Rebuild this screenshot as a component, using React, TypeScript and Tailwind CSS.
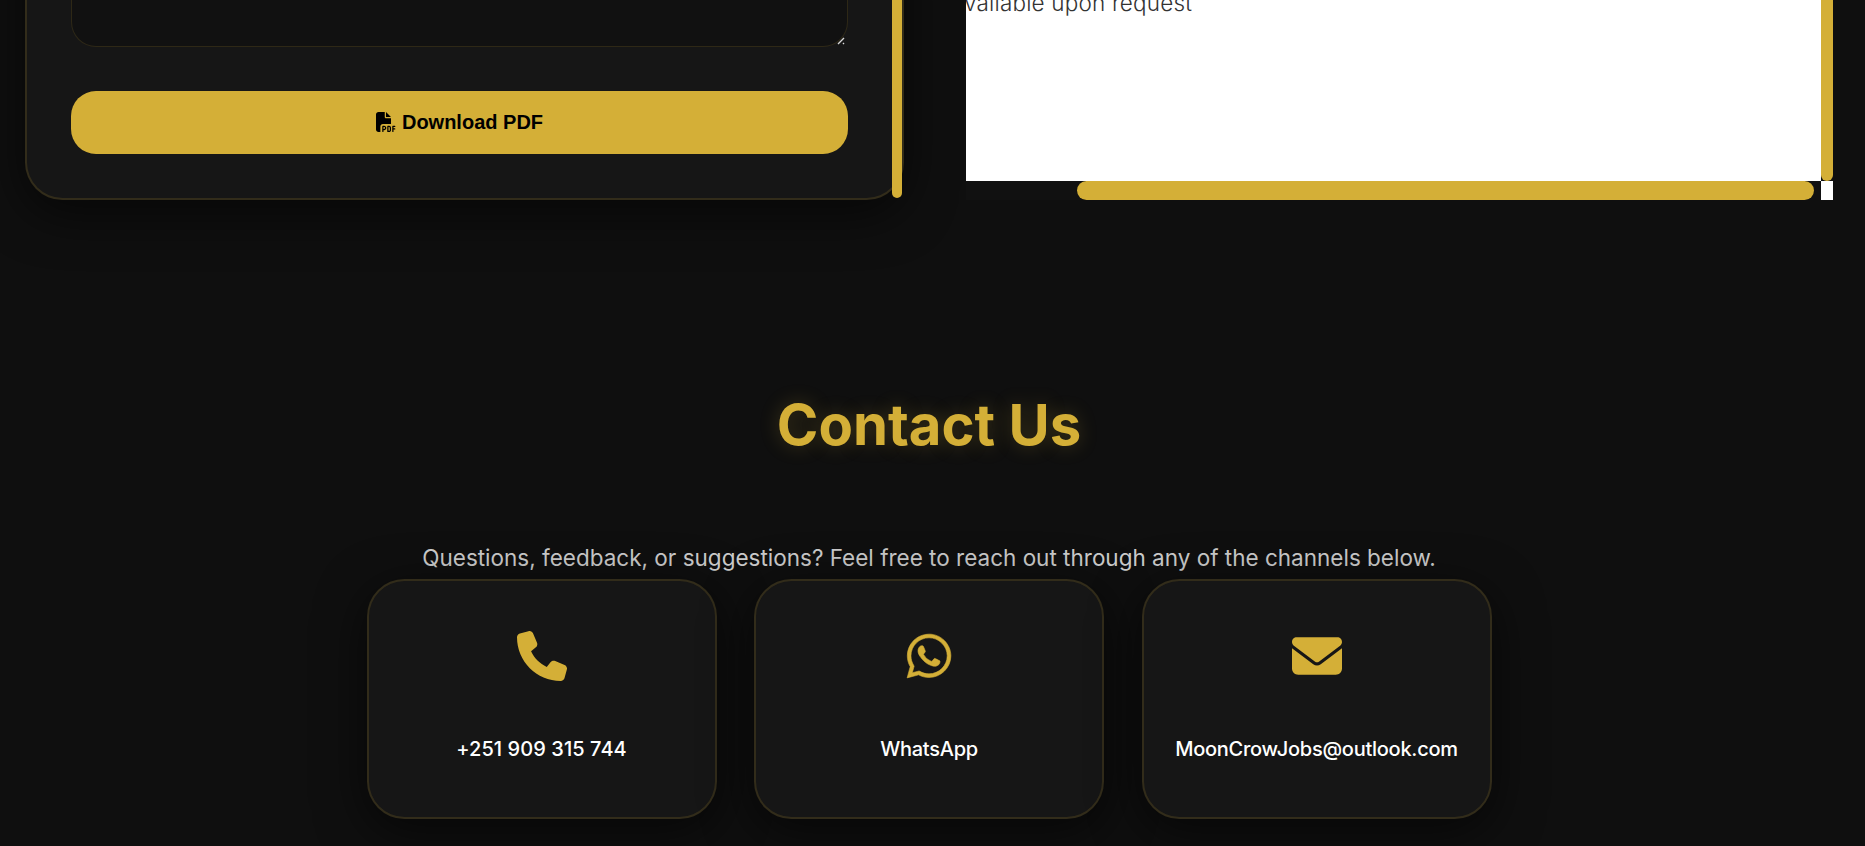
import { FaEnvelope, FaFilePdf, FaPhone, FaWhatsapp } from "react-icons/fa6";

const CHANNELS = [
  { label: "+251 909 315 744", icon: FaPhone, iconClass: "", labelClass: "tracking-[0.003em]" },
  { label: "WhatsApp", icon: FaWhatsapp, iconClass: "stroke-current stroke-[6px]", labelClass: "tracking-[-0.013em]" },
  { label: "MoonCrowJobs@outlook.com", icon: FaEnvelope, iconClass: "", labelClass: "tracking-[-0.013em]" },
];

function ResumeForm() {
  return (
    <div className="relative w-[879px] h-[260px] -mt-[60px] rounded-b-[37.5px] border-2 border-t-0 border-[#d4af37]/15 bg-[#161616] pr-[54px] pl-[44px] shadow-[0_12px_50px_rgba(0,0,0,0.6)]">
      <div className="relative h-[107px] rounded-b-[25px] border border-t-0 border-[#d4af37]/15 bg-[#111111]">
        <svg className="absolute right-[2px] bottom-[1px] h-2 w-2" viewBox="0 0 8 8" stroke="#d8d8d8" strokeWidth="1.4">
          <path d="M1 7 7 1M6 7 7 6" />
        </svg>
      </div>
      <button className="mt-[44px] flex h-[63px] w-full items-center justify-center gap-[6px] rounded-[25px] bg-[#d4af37] pb-[2px] font-['Liberation_Sans'] text-[20px] font-bold text-black">
        <FaFilePdf className="h-5 w-5" /> Download PDF
      </button>
      {/* scrollbar thumb of the form column */}
      <div className="absolute right-0 bottom-0 h-[258px] w-[10px] rounded-b-full bg-[#d4af37]" />
    </div>
  );
}

function ResumePreview() {
  return (
    <div className="grid h-[200px] w-[867px] grid-cols-[855px_12px] grid-rows-[181px_19px] bg-[#111111]">
      <div className="overflow-hidden bg-white">
        <p className="-mt-[15px] -ml-[2px] text-[22.5px] leading-9 font-light tracking-[0.008em] whitespace-nowrap text-[#333333]">
          vailable upon request
        </p>
      </div>
      <div className="rounded-b-full bg-[#d4af37]" />
      <div className="mr-[7px] ml-[111px] rounded-full bg-[#d4af37]" />
      <div className="bg-white" />
    </div>
  );
}

export default function App() {
  return (
    <main className="h-[846px] w-full overflow-hidden bg-[#0f0f0f] font-['Inter',sans-serif]">
      <section className="flex h-[200px] gap-[62px] pl-[25px]">
        <ResumeForm />
        <ResumePreview />
      </section>

      <section className="flex w-[1858px] flex-col items-center">
        <h2 className="mt-[191px] text-[56.25px] leading-[68px] font-bold text-[#d4af37] [text-shadow:0_0_19px_rgba(212,175,55,0.25)]">
          Contact Us
        </h2>
        <p className="mt-[80px] text-[22.5px] leading-[38px] text-[#cccccc]">
          Questions, feedback, or suggestions? Feel free to reach out through any of the channels below.
        </p>
        <div className="mt-[2px] flex gap-[37.5px]">
          {CHANNELS.map(({ label, icon: Icon, iconClass, labelClass }) => (
            <a
              key={label}
              className="flex h-[240px] w-[350px] flex-col items-center rounded-[37.5px] border-2 border-[#d4af37]/15 bg-[#161616] pt-[50px] text-[20px] font-medium text-white shadow-[0_12px_50px_rgba(0,0,0,0.6)]"
            >
              <Icon className={`h-[50px] w-[50px] text-[#d4af37] ${iconClass}`} />
              <span className={`mt-[52px] leading-8 ${labelClass}`}>{label}</span>
            </a>
          ))}
        </div>
      </section>
    </main>
  );
}
